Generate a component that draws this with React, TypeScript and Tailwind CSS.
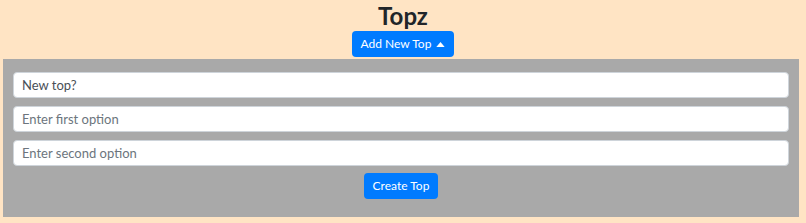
import { useState } from 'react';

const App = () => {
  const [open, setOpen] = useState(true);

  return (
    <div className="h-[223px] overflow-hidden bg-[#ffe4c4] text-[#212529] font-['Lato',sans-serif]">
      <h1 className="text-center text-[24px] font-bold leading-[30px] pt-[1px]">Topz</h1>
      <div className="flex justify-center">
        <button
          onClick={() => setOpen(!open)}
          className="bg-[#007bff] text-white text-[12px] rounded-[4px] h-[26px] px-[9px] flex items-center gap-[5px]"
        >
          Add New Top
          <svg width="9" height="5" viewBox="0 0 10 6">
            <path d="M0 6 L5 0 L10 6 Z" fill="white" />
          </svg>
        </button>
      </div>
      {open && (
        <div className="ml-[3px] w-[796px] mt-[2px] bg-[#a9a9a9] px-[10px] pt-[13px] pb-[18px]">
          <div className="flex flex-col gap-[8px]">
            <input
              className="h-[26px] bg-white rounded-[4px] border border-[#ced4da] px-[8px] text-[13px] text-[#495057] outline-none"
              defaultValue="New top?"
            />
            <input
              className="h-[26px] bg-white rounded-[4px] border border-[#ced4da] px-[8px] text-[13px] placeholder:text-[#6c757d] outline-none"
              placeholder="Enter first option"
            />
            <input
              className="h-[26px] bg-white rounded-[4px] border border-[#ced4da] px-[8px] text-[13px] placeholder:text-[#6c757d] outline-none"
              placeholder="Enter second option"
            />
          </div>
          <div className="flex justify-center mt-[7px]">
            <button className="bg-[#007bff] text-white text-[12px] rounded-[4px] h-[26px] px-[9px]">
              Create Top
            </button>
          </div>
        </div>
      )}
      <h3 className="mt-[3px] pl-[60px] text-[20px] font-bold leading-[24px]">Latest Topz</h3>
    </div>
  );
};

export default App;
